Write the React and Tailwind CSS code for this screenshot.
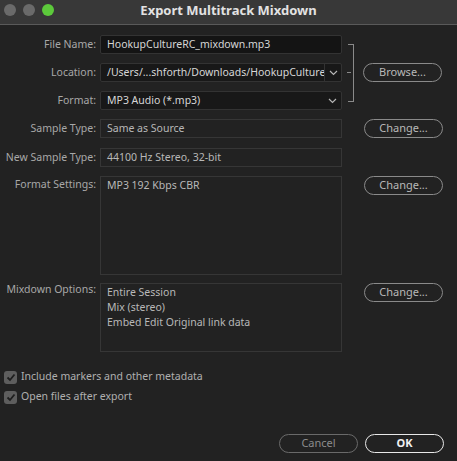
import React from 'react';

const font = { fontFamily: '"Noto Sans", "Open Sans", sans-serif' };

function Chevron() {
  return (
    <svg width="9" height="6" viewBox="0 0 9 6" className="shrink-0">
      <path d="M1 1l3.5 3.5L8 1" fill="none" stroke="#b5b5b5" strokeWidth="1.2" />
    </svg>
  );
}

function Pill({ children, className = '' }) {
  return (
    <div className={`flex h-[19px] w-[79px] items-center justify-center rounded-full border-[1.5px] border-[#8a8a8a] text-[11px] text-[#b8b8b8] ${className}`}>
      {children}
    </div>
  );
}

function Label({ children, className = '' }) {
  return <div className={`w-[96px] shrink-0 text-right text-[10.5px] text-[#a8a8a8] ${className}`}>{children}:</div>;
}

function Check({ children }) {
  return (
    <div className="flex h-[18px] items-center gap-[4px] pl-[4px]">
      <div className="flex h-[13px] w-[13px] items-center justify-center rounded-[3px] bg-[#5e5e5e]">
        <svg width="10" height="9" viewBox="0 0 10 9">
          <path d="M1.5 4.5l2.5 2.5L8.5 1.5" fill="none" stroke="#1e1e1e" strokeWidth="1.8" />
        </svg>
      </div>
      <span className="text-[10.5px] text-[#b0b0b0]">{children}</span>
    </div>
  );
}

export default function App() {
  return (
    <div className="h-[461px] w-[457px] overflow-hidden bg-[#222222] select-none" style={font}>
      {/* Title bar */}
      <div className="relative flex h-[25px] items-center justify-center border-b border-[#5a5a5a] bg-[#383838]">
        <div className="absolute left-[4px] top-[4px] flex gap-[7px]">
          <div className="h-[12px] w-[12px] rounded-full bg-[#6a6a6a]" />
          <div className="h-[12px] w-[12px] rounded-full bg-[#6a6a6a]" />
          <div className="h-[12px] w-[12px] rounded-full bg-[#5cc93b]" />
        </div>
        <div className="-mt-[2px] text-[13px] font-bold text-[#e2e2e2]">Export Multitrack Mixdown</div>
      </div>

      {/* File group */}
      <div className="mt-[10px] flex items-center">
        <div className="flex flex-col gap-[9px]">
          <div className="flex h-[19px] items-center">
            <Label>File Name</Label>
            <div className="ml-[4px] flex h-[19px] w-[242px] items-center rounded-[2px] border border-[#333] bg-[#141414] px-[6px] text-[10.5px] text-[#d6d6d6]">
              HookupCultureRC_mixdown.mp3
            </div>
          </div>
          <div className="flex h-[19px] items-center">
            <Label>Location</Label>
            <div className="ml-[4px] flex h-[19px] w-[242px] items-center overflow-hidden rounded-[2px] border border-[#333] bg-[#181818] text-[10.5px] text-[#d6d6d6]">
              <div className="flex-1 overflow-hidden whitespace-nowrap pl-[6px]">/Users/...shforth/Downloads/HookupCulture</div>
              <div className="flex h-full w-[17px] items-center justify-center border-l border-[#333]">
                <Chevron />
              </div>
            </div>
          </div>
          <div className="flex h-[19px] items-center">
            <Label>Format</Label>
            <div className="ml-[4px] flex h-[19px] w-[242px] items-center justify-between rounded-[2px] border border-[#333] bg-[#181818] pl-[6px] pr-[4px] text-[10.5px] text-[#d6d6d6]">
              <span>MP3 Audio (*.mp3)</span>
              <Chevron />
            </div>
          </div>
        </div>
        {/* bracket */}
        <div className="ml-[6px] flex h-[58px] w-[6px] items-center border-y border-r border-[#8a8a8a]">
          <div className="-ml-[1px] h-px w-[4px] bg-[#8a8a8a]" />
        </div>
        <Pill className="ml-[9px]">Browse...</Pill>
      </div>

      {/* Sample Type */}
      <div className="mt-[9px] flex h-[19px] items-center">
        <Label>Sample Type</Label>
        <div className="ml-[4px] flex h-[19px] w-[242px] items-center border border-[#363636] px-[6px] text-[10.5px] text-[#b8b8b8]">Same as Source</div>
        <Pill className="ml-[22px]">Change...</Pill>
      </div>

      <div className="mt-[10px] flex h-[19px] items-center">
        <Label>New Sample Type</Label>
        <div className="ml-[4px] flex h-[19px] w-[242px] items-center border border-[#363636] px-[6px] text-[10.5px] text-[#b8b8b8]">44100 Hz Stereo, 32-bit</div>
      </div>

      <div className="mt-[9px] flex items-start">
        <Label className="mt-[1px]">Format Settings</Label>
        <div className="ml-[4px] h-[99px] w-[242px] border border-[#363636] px-[6px] pt-[1px] text-[10.5px] leading-[15px] text-[#b8b8b8]">MP3 192 Kbps CBR</div>
        <Pill className="ml-[22px]">Change...</Pill>
      </div>

      <div className="mt-[8px] flex items-start">
        <Label className="mt-[-1px]">Mixdown Options</Label>
        <div className="ml-[4px] h-[69px] w-[242px] border border-[#363636] px-[6px] pt-[1px] text-[10.5px] leading-[15px] text-[#b8b8b8]">
          <div>Entire Session</div>
          <div>Mix (stereo)</div>
          <div>Embed Edit Original link data</div>
        </div>
        <Pill className="ml-[22px]">Change...</Pill>
      </div>

      <div className="mt-[16px] flex flex-col gap-[2px]">
        <Check>Include markers and other metadata</Check>
        <Check>Open files after export</Check>
      </div>

      <div className="mt-[28px] flex justify-end gap-[7px] pr-[13px]">
        <div className="flex h-[19px] w-[79px] items-center justify-center rounded-full border-[1.5px] border-[#6a6a6a] text-[11px] text-[#8c8c8c]">Cancel</div>
        <div className="flex h-[19px] w-[79px] items-center justify-center rounded-full border-[1.5px] border-[#e8e8e8] text-[11px] font-bold text-[#f0f0f0]">OK</div>
      </div>
    </div>
  );
}
